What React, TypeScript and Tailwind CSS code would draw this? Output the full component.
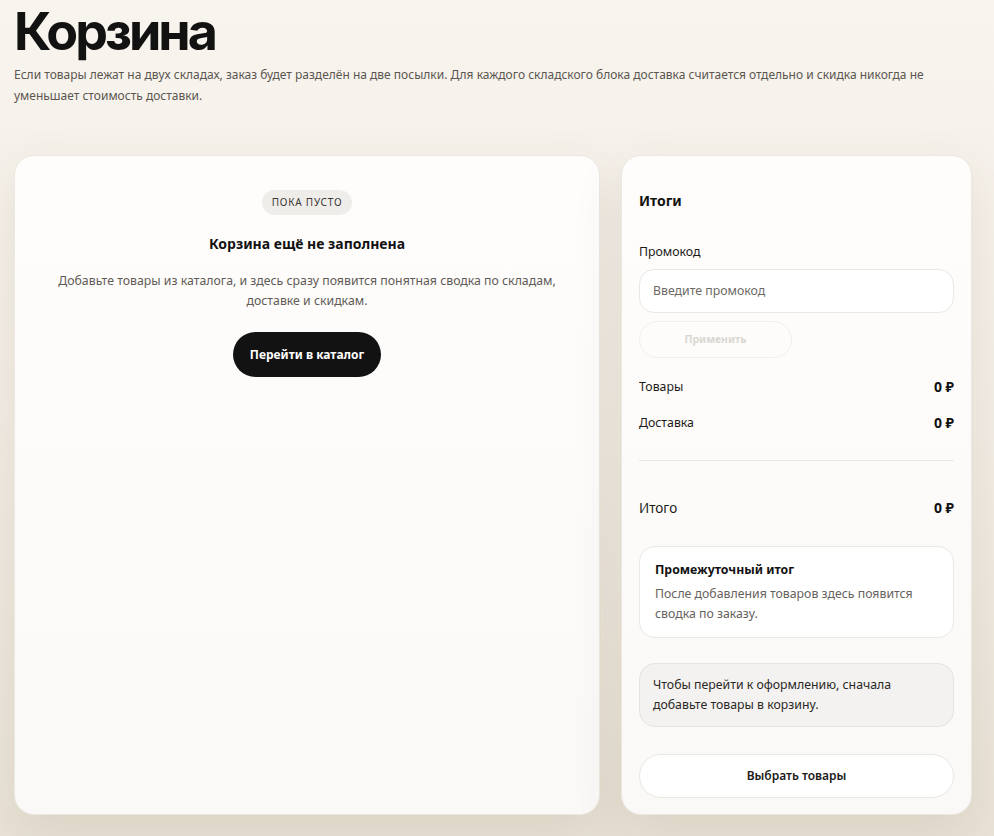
import React from "react";

const font = { fontFamily: '"Noto Sans", "Open Sans", Arial, sans-serif' };
const headingFont = { fontFamily: 'Inter, "Noto Sans", Arial, sans-serif' };

function Row({ label, value, big }: { label: string; value: string; big?: boolean }) {
  return (
    <div className="flex items-center justify-between leading-[20px]">
      <span className={big ? "text-[13.5px] text-[#1c1b19]" : "text-[12.3px] text-[#1c1b19]"}>{label}</span>
      <span className="text-[14px] font-bold text-[#111]">{value}</span>
    </div>
  );
}

export default function App() {
  return (
    <div
      style={font}
      className="min-h-[836px] w-full bg-gradient-to-b from-[#f8f4ee] via-[#f2ede5] to-[#e9e2d6] pl-[14px] pr-[22px] pb-[20px]"
    >
      <h1 style={headingFont} className="text-[52px] font-bold leading-[64px] tracking-[-0.058em] text-[#121212]">
        Корзина
      </h1>
      <p className="text-[12px] leading-[21px] text-[#5b5650]">
        Если товары лежат на двух складах, заказ будет разделён на две посылки. Для каждого складского блока доставка считается отдельно и скидка никогда не уменьшает стоимость доставки.
      </p>

      <div className="mt-[49px] flex gap-[21px]">
        {/* empty cart */}
        <section className="flex h-[660px] w-[586px] flex-col items-center rounded-[20px] border border-[#ebe7e1] bg-gradient-to-b from-[#fefdfc] to-[#faf9f7] pt-[34px] shadow-[0_18px_50px_rgba(90,70,40,0.10)]">
          <span className="rounded-full bg-[#efedea] px-[10px] py-[5px] text-[10px] leading-[15px] tracking-[0.08em] text-[#3a3835]">
            ПОКА ПУСТО
          </span>
          <h2 className="mt-[19px] text-[14px] font-bold leading-[20px] text-[#121212]">Корзина ещё не заполнена</h2>
          <p className="mt-[17px] max-w-[510px] text-center text-[12.3px] leading-[20px] text-[#5f5b56]">
            Добавьте товары из каталога, и здесь сразу появится понятная сводка по складам, доставке и скидкам.
          </p>
          <button className="mt-[21px] h-[45px] rounded-full bg-[#121212] px-[17px] text-[12px] font-bold text-white">
            Перейти в каталог
          </button>
        </section>

        {/* summary */}
        <aside className="flex h-[660px] w-[351px] flex-col rounded-[20px] border border-[#ebe7e1] bg-gradient-to-b from-[#fefdfc] to-[#faf9f7] px-[17px] pt-[35px] shadow-[0_18px_50px_rgba(90,70,40,0.10)]">
          <h3 className="text-[14px] font-bold leading-[20px] text-[#121212]">Итоги</h3>
          <label className="mt-[32px] text-[12.3px] leading-[18px] text-[#1c1b19]">Промокод</label>
          <div className="mt-[8px] flex h-[44px] items-center rounded-[15px] border border-[#ebe8e3] bg-white px-[13px] text-[12.3px] text-[#6e6a65]">
            Введите промокод
          </div>
          <button className="mt-[8px] h-[37px] w-[153px] rounded-full border border-[#f1efeb] bg-[#fdfcfb] text-[10.5px] font-bold text-[#d9d6d1]">
            Применить
          </button>
          <div className="mt-[19px] flex flex-col gap-[16px]">
            <Row label="Товары" value="0 ₽" />
            <Row label="Доставка" value="0 ₽" />
          </div>
          <div className="mt-[27px] h-px bg-[#ebe8e3]" />
          <div className="mt-[37px]">
            <Row label="Итого" value="0 ₽" big />
          </div>
          <div className="mt-[28px] rounded-[16px] border border-[#ece9e4] bg-white px-[15px] pb-[13px] pt-[14px]">
            <div className="text-[12.3px] font-bold leading-[18px] text-[#121212]">Промежуточный итог</div>
            <p className="mt-[5px] text-[12.3px] leading-[20px] text-[#66625d]">
              После добавления товаров здесь появится сводка по заказу.
            </p>
          </div>
          <div className="mt-[25px] rounded-[16px] border border-[#e6e4e0] bg-[#f3f2f0] px-[13px] py-[11px] text-[12.3px] leading-[20px] text-[#2a2825]">
            Чтобы перейти к оформлению, сначала добавьте товары в корзину.
          </div>
          <button className="mt-[27px] h-[44px] rounded-full border border-[#ebe8e3] bg-white text-[12px] font-semibold text-[#1c1b19]">
            Выбрать товары
          </button>
        </aside>
      </div>
    </div>
  );
}
